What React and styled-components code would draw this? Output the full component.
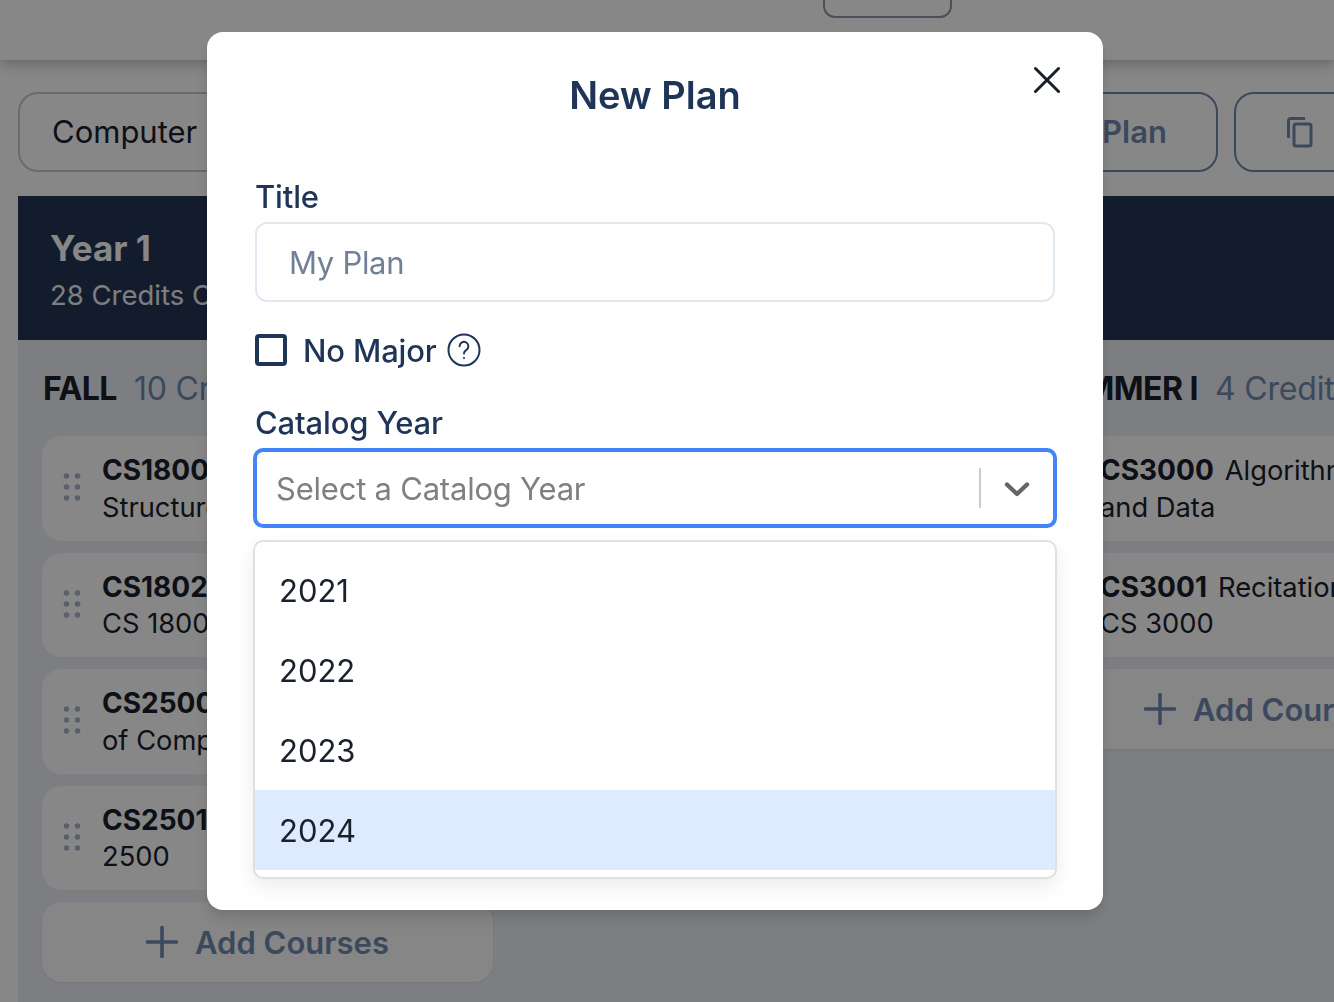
import React from "react";
import styled, { createGlobalStyle } from "styled-components";

const Global = createGlobalStyle`
  html, body { margin: 0; padding: 0; height: 1002px; overflow: hidden; background: #fff; }
  body { font-family: Inter, "Noto Sans", sans-serif; -webkit-font-smoothing: antialiased; }
  * { box-sizing: border-box; }
`;

const Page = styled.div`
  width: 1334px;
  height: 1002px;
  overflow: hidden;
  background: #fff;
`;
const TopBar = styled.header`
  height: 60px;
  background: #fff;
  box-shadow: 0 3px 14px rgba(0, 0, 0, 0.28);
  padding-left: 823px;
  position: relative;
`;
const TopButton = styled.div`
  width: 129px;
  height: 18px;
  border: 2px solid #8f98a6;
  border-top: none;
  border-radius: 0 0 12px 12px;
`;
const Toolbar = styled.div`
  display: grid;
  grid-template-columns: 926px 258px 160px;
  gap: 16px;
  height: 80px;
  margin: 32px 0 24px 18px;
`;
const MajorSelect = styled.div`
  border: 2px solid #c4ccd8;
  border-radius: 20px;
  display: flex;
  align-items: center;
  padding: 0 0 2px 32px;
  font-size: 31px;
  color: #1a202c;
`;
const OutlineButton = styled.div`
  border: 2px solid #718ab0;
  border-radius: 20px;
  display: flex;
  align-items: center;
  justify-content: ${(p) => (p.$icon ? "flex-start" : "flex-end")};
  padding: ${(p) => (p.$icon ? "0 0 0 48px" : "0 49px 2px 0")};
  font-size: 31px;
  font-weight: 600;
  color: #718ab0;
  white-space: nowrap;
`;
const Plan = styled.div`
  margin-left: 18px;
  width: 1500px;
`;
const YearBanner = styled.div`
  height: 144px;
  background: #253655;
  color: #fff;
  padding: 30px 32px;
`;
const YearTitle = styled.div`
  font-size: 35px;
  font-weight: 700;
  line-height: 44px;
`;
const YearSub = styled.div`
  font-size: 27.5px;
  line-height: 36px;
  margin-top: 7px;
  opacity: 0.92;
`;
const Columns = styled.div`
  display: grid;
  grid-template-columns: 500px 498px 500px;
  background: #edeff4;
  height: 700px;
`;
const Column = styled.div`
  padding: 28px 25px 0 24px;
`;
const Term = styled.div`
  display: flex;
  gap: 17px;
  font-size: 32px;
  line-height: 42px;
  margin: 0 0 26px 1px;
  white-space: nowrap;
`;
const TermName = styled.span`
  font-weight: 700;
  letter-spacing: -0.5px;
  color: #1a202c;
`;
const TermCredits = styled.span`
  letter-spacing: -0.2px;
  color: #718ab0;
`;
const Card = styled.div`
  height: 104.5px;
  background: #fff;
  border-radius: 20px;
  margin-bottom: 12px;
  display: flex;
  align-items: center;
  padding: 2px 0 0 20px;
  gap: 20px;
  font-size: 27.3px;
  line-height: 36.5px;
  color: #1a202c;
  white-space: nowrap;
`;
const Code = styled.b`
  font-size: 28px;
  font-weight: 700;
  margin-right: 11px;
`;
const GripIcon = styled.svg`
  margin-top: -4px;
  fill: #a8b5c8;
`;
const AddCourses = styled.div`
  height: 80px;
  background: #fdfdfe;
  border-radius: 20px;
  box-shadow: 0 1px 3px rgba(0, 0, 0, 0.08);
  display: flex;
  align-items: center;
  justify-content: center;
  gap: 17px;
  font-size: 31px;
  font-weight: 600;
  color: #718ab0;
  white-space: nowrap;
  margin-top: ${(p) => p.$top || 0}px;
`;
const Overlay = styled.div`
  position: fixed;
  inset: 0;
  background: rgba(0, 0, 0, 0.47);
  display: flex;
  justify-content: center;
  padding: 32px 231px 0 207px;
`;
const Modal = styled.div`
  position: relative;
  width: 896px;
  height: 878px;
  background: #fff;
  border-radius: 16px;
  padding: 40px 48px 0;
  box-shadow: 0 10px 15px rgba(0, 0, 0, 0.1), 0 4px 6px rgba(0, 0, 0, 0.05);
`;
const ModalTitle = styled.h2`
  margin: 0 0 60px;
  font-size: 38px;
  line-height: 46px;
  font-weight: 600;
  text-align: center;
  color: #1e3558;
`;
const Close = styled.button`
  position: absolute;
  top: 34px;
  right: 43px;
  width: 26px;
  height: 28px;
  padding: 0;
  border: none;
  background: none;
  color: #1a202c;
  display: flex;
`;
const Label = styled.label`
  display: block;
  font-size: 31px;
  line-height: 38px;
  font-weight: 500;
  letter-spacing: -0.15px;
  color: #1e3558;
  height: 38px;
`;
const TextInput = styled.div`
  margin-top: 6px;
  height: 80px;
  border: 2px solid #e2e8f0;
  border-radius: 12px;
  padding: 0 0 0 32px;
  display: flex;
  align-items: center;
  font-size: 31px;
  letter-spacing: -0.3px;
  color: #718096;
`;
const CheckRow = styled.div`
  margin: 32px 0 38px;
  display: flex;
  align-items: center;
  height: 32px;
  font-size: 31px;
  font-weight: 500;
  letter-spacing: -0.15px;
  color: #1e3558;
`;
const CheckBox = styled.span`
  width: 32px;
  height: 32px;
  border: 4px solid #1e3558;
  border-radius: 4px;
  margin-right: 16px;
`;
const HelpIcon = styled.svg`
  margin-left: 10px;
`;
const SelectBox = styled.div`
  margin: 6px -2px 0 -2px;
  height: 80px;
  border: 4px solid #4583fa;
  border-radius: 10px;
  display: flex;
  align-items: center;
  padding-left: 19px;
  font-size: 31px;
  letter-spacing: -0.22px;
  color: #808080;
`;
const SelectValue = styled.span`
  flex: 1;
`;
const Separator = styled.span`
  width: 2px;
  height: 40px;
  background: #cccccc;
`;
const Chevron = styled.span`
  width: 72px;
  display: flex;
  justify-content: center;
  padding-top: 2px;
  color: #666;
`;
const Menu = styled.div`
  margin: 12px -2px 0 -2px;
  border: 2px solid #e0e0e0;
  border-radius: 10px;
  padding: 8px 0 7px;
  background: #fff;
  box-shadow: 0 8px 20px rgba(0, 0, 0, 0.08);
`;
const Option = styled.div`
  height: 80px;
  display: flex;
  align-items: center;
  padding-left: 24px;
  font-size: 31px;
  color: #1a202c;
  background: ${(p) => (p.$active ? "#deebff" : "transparent")};
`;

const Plus = () => (
  <svg width="32" height="32" viewBox="0 0 32 32" fill="none" stroke="currentColor" strokeWidth="3.6" strokeLinecap="round">
    <path d="M16 1.5v29M1.5 16h29" />
  </svg>
);
const Grip = () => (
  <GripIcon width="20" height="32" viewBox="0 0 20 32">
    {[5, 16, 27].map((y) => (
      <React.Fragment key={y}>
        <circle cx="4.5" cy={y} r="2.8" />
        <circle cx="15.5" cy={y} r="2.8" />
      </React.Fragment>
    ))}
  </GripIcon>
);

const fall = [
  ["CS1800", "Discrete", "Structures"],
  ["CS1802", "Seminar for", "CS 1800"],
  ["CS2500", "Fundamentals", "of Computer Science 1"],
  ["CS2501", "Lab for CS", "2500"],
];
const summer = [
  ["CS3000", "Algorithms", "and Data"],
  ["CS3001", "Recitation for", "CS 3000"],
];

const Course = ({ c }) => (
  <Card>
    <Grip />
    <div>
      <Code>{c[0]}</Code>
      {c[1]}
      <br />
      {c[2]}
    </div>
  </Card>
);

export default function App() {
  return (
    <>
      <Global />
      <Page>
        <TopBar>
          <TopButton />
        </TopBar>
        <Toolbar>
          <MajorSelect>Computer Science</MajorSelect>
          <OutlineButton>New Plan</OutlineButton>
          <OutlineButton $icon>
            <svg width="32" height="32" viewBox="0 0 32 32" fill="none" stroke="currentColor" strokeWidth="3">
              <rect x="10" y="8" width="17" height="22" rx="2" />
              <path d="M21 2.5H6.5a2 2 0 0 0-2 2V22" />
            </svg>
          </OutlineButton>
        </Toolbar>
        <Plan>
          <YearBanner>
            <YearTitle>Year 1</YearTitle>
            <YearSub>28 Credits Completed</YearSub>
          </YearBanner>
          <Columns>
            <Column>
              <Term>
                <TermName>FALL</TermName>
                <TermCredits>10 Credits</TermCredits>
              </Term>
              {fall.map((c) => (
                <Course key={c[0]} c={c} />
              ))}
              <AddCourses $top={3}>
                <Plus />
                Add Courses
              </AddCourses>
            </Column>
            <Column />
            <Column>
              <Term>
                <TermName>SUMMER I</TermName>
                <TermCredits>4 Credits</TermCredits>
              </Term>
              {summer.map((c) => (
                <Course key={c[0]} c={c} />
              ))}
              <AddCourses>
                <Plus />
                Add Courses
              </AddCourses>
            </Column>
          </Columns>
        </Plan>
      </Page>
      <Overlay>
        <Modal>
          <ModalTitle>New Plan</ModalTitle>
          <Close aria-label="Close">
            <svg width="26" height="28" viewBox="0 0 26 28" fill="none" stroke="currentColor" strokeWidth="3" strokeLinecap="round">
              <path d="M1.5 2.5l23 23M24.5 2.5l-23 23" />
            </svg>
          </Close>
          <Label>Title</Label>
          <TextInput>My Plan</TextInput>
          <CheckRow>
            <CheckBox />
            No Major
            <HelpIcon width="34" height="34" viewBox="0 0 34 34" fill="none" stroke="currentColor" strokeWidth="2">
              <circle cx="17" cy="17" r="15.5" />
              <path d="M12.6 13.2a4.4 4.4 0 1 1 6.6 3.9c-1.4.8-2.2 1.7-2.2 3.4" strokeLinecap="round" />
              <circle cx="17" cy="25" r="1.1" fill="currentColor" stroke="none" />
            </HelpIcon>
          </CheckRow>
          <Label>Catalog Year</Label>
          <SelectBox>
            <SelectValue>Select a Catalog Year</SelectValue>
            <Separator />
            <Chevron>
              <svg width="26" height="18" viewBox="0 0 26 18" fill="none" stroke="currentColor" strokeWidth="4.4" strokeLinecap="round" strokeLinejoin="round">
                <path d="M3 4.5l10 9.5 10-9.5" />
              </svg>
            </Chevron>
          </SelectBox>
          <Menu>
            <Option>2021</Option>
            <Option>2022</Option>
            <Option>2023</Option>
            <Option $active>2024</Option>
          </Menu>
        </Modal>
      </Overlay>
    </>
  );
}
